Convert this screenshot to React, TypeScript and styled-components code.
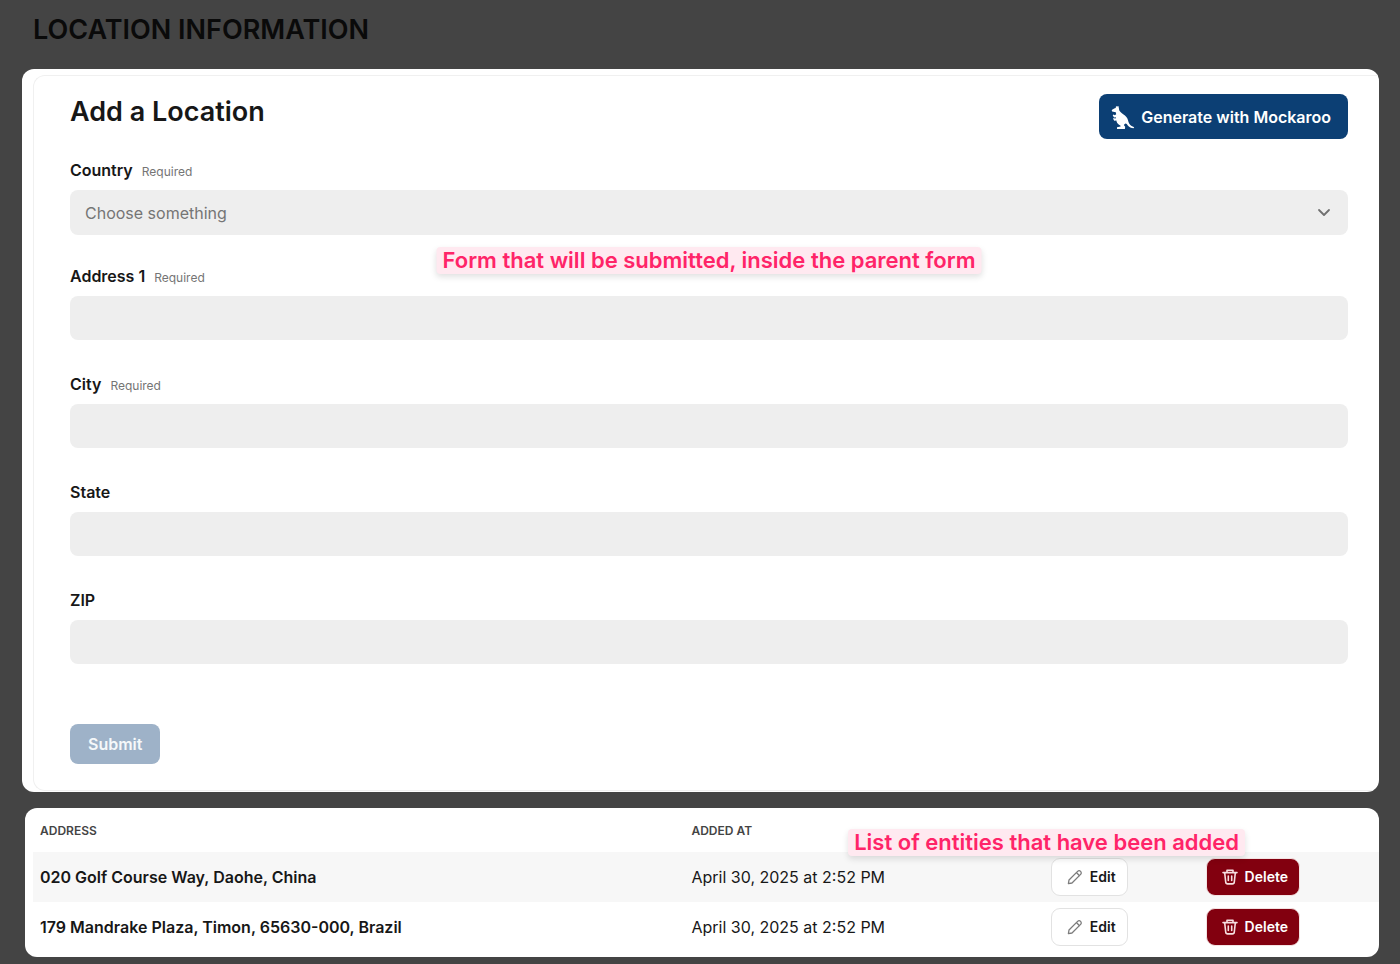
import React from 'react';
import styled, { createGlobalStyle } from 'styled-components';

const GlobalStyle = createGlobalStyle`
  *, *::before, *::after { box-sizing: border-box; }
  body {
    margin: 0;
    background: #444444;
    color: #171717;
    font-family: Inter, "Liberation Sans", sans-serif;
    font-size: 16px;
    line-height: 20px;
  }
  button, input, select { font: inherit; }
`;

const Page = styled.main`
  padding: 10px 21px 6px 22px;
`;

const PageTitle = styled.h1`
  margin: 0 0 19px;
  padding-left: 11px;
  color: #0a0a0a;
  font-size: 27px;
  line-height: 40px;
  font-weight: 600;
`;

const Panel = styled.section`
  position: relative;
  background: #ffffff;
  border-radius: 12px;
  overflow: hidden;
`;

const FormPanel = styled(Panel)`
  margin-bottom: 16px;
  padding: 6px 0 1px 11px;
`;

const ListPanel = styled(Panel)`
  margin-left: 3px;
  padding: 0 0 5px 8px;
`;

const FormCard = styled.form`
  padding: 18px 31px 26px 36px;
  border: 1px solid #f0f0f0;
  border-right: 0;
  border-radius: 12px 0 0 12px;
`;

const CardHeader = styled.header`
  display: flex;
  justify-content: space-between;
  align-items: flex-start;
  margin-bottom: 21px;
`;

const CardTitle = styled.h2`
  margin: 0;
  font-size: 27px;
  line-height: 36px;
  font-weight: 600;
`;

const MockarooButton = styled.button`
  display: flex;
  align-items: center;
  gap: 6px;
  height: 45px;
  padding: 0 17px 0 12px;
  border: 0;
  border-radius: 8px;
  background: #0c3f74;
  color: #ffffff;
  font-weight: 600;
`;

const Field = styled.div<{ $gap: number }>`
  position: relative;
  margin-bottom: ${(p) => p.$gap}px;
`;

const FieldLabel = styled.label`
  display: flex;
  align-items: baseline;
  gap: 9px;
  height: 20px;
  margin-bottom: 10px;
  font-weight: 600;
`;

const Required = styled.span`
  color: #757575;
  font-size: 12px;
  font-weight: 400;
`;

const TextInput = styled.input`
  display: block;
  width: 100%;
  height: 44px;
  padding: 0 15px;
  border: 0;
  border-radius: 8px;
  background: #eeeeee;
`;

const SelectBox = styled.div`
  position: relative;
`;

const Select = styled.select`
  display: block;
  width: 100%;
  height: 45px;
  padding: 0 40px 0 15px;
  border: 0;
  border-radius: 8px;
  background: #eeeeee;
  color: #757575;
  appearance: none;
`;

const SelectArrow = styled.svg`
  position: absolute;
  top: 14px;
  right: 16px;
  pointer-events: none;
`;

const SubmitButton = styled.button`
  display: block;
  height: 40px;
  padding: 0 18px;
  border: 0;
  border-radius: 8px;
  background: #9eb2c8;
  color: #f5f8fa;
  font-weight: 600;
`;

const Callout = styled.p`
  position: absolute;
  z-index: 1;
  margin: 0;
  padding: 0 6px;
  border-radius: 4px;
  background: #ffe9f0;
  box-shadow: 0 3px 6px rgba(0, 0, 0, 0.12);
  color: #ff2468;
  font-size: 22px;
  line-height: 27px;
  font-weight: 600;
  white-space: nowrap;
`;

const FormCallout = styled(Callout)`
  top: calc(100% + 12px);
  left: 50%;
  transform: translateX(-50%);
`;

const ListCallout = styled(Callout)`
  top: 21px;
  right: 134px;
`;

const Table = styled.table`
  width: 100%;
  border-collapse: collapse;
  table-layout: fixed;
`;

const HeadCell = styled.th<{ $width: string }>`
  width: ${(p) => p.$width};
  height: 44px;
  padding: 1px 7px 0;
  color: #444444;
  font-size: 12px;
  font-weight: 600;
  text-align: left;
`;

const Row = styled.tr`
  &:nth-child(odd) { background: #f7f7f7; }
`;

const Cell = styled.td<{ $strong?: boolean }>`
  height: 50px;
  padding: 0 7px;
  font-weight: ${(p) => (p.$strong ? 600 : 400)};
`;

const ActionButton = styled.button<{ $danger?: boolean }>`
  display: flex;
  align-items: center;
  gap: 6px;
  height: 38px;
  padding: 0 11px 0 14px;
  border: 1px solid ${(p) => (p.$danger ? '#f3e3e3' : '#e2e2e2')};
  border-radius: 9px;
  background: ${(p) => (p.$danger ? '#82000f' : '#ffffff')};
  color: ${(p) => (p.$danger ? '#ffffff' : '#171717')};
  font-size: 14px;
  font-weight: 600;
`;

const KangarooIcon = () => (
  <svg width="24" height="24" viewBox="0 0 24 24" fill="#ffffff" aria-hidden="true">
    <path d="M5 1.2 6.2 1.5 7.4 .9 7.9 3.2 8.2 5.2C8.9 6.8 10.4 7.9 12.2 9.2C14.8 11 16.5 12.6 17 15.2C17.6 17.7 18.5 19.4 20.2 20.8L23.2 22.3 22.6 23.3C20.4 23.1 18 22 16.6 20.2C16 19.2 15.5 18.7 14.7 18.6C13.8 18.9 13.1 19.5 13 20.2L14.2 21.7 13.9 23.9H6V22.3L9.6 21.6 9.4 20.6C7.4 19.6 6 18.2 5.6 16.5L5.4 15.6 3.2 15.7 2 13.4 3.1 12.9 4 13.7 5 13.1 4.8 12.2 3 12.4 1.7 10.2 2.6 9.4 3.8 10.3 5.2 9.2 4.8 7.3 3.5 7.1 1.1 6.6.7 5 3.2 3.4 4.7 2.9Z" />
  </svg>
);

const PencilIcon = () => (
  <svg width="18" height="18" viewBox="0 0 18 18" fill="none" stroke="#7c7c7c" strokeWidth="1.3" strokeLinejoin="round" strokeLinecap="round" aria-hidden="true">
    <path d="M3 12 11.6 3.4a2.1 2.1 0 0 1 3 3L6 15l-3.6.6L3 12Z" />
    <path d="m10.6 4.8 2.7 2.7" />
  </svg>
);

const TrashIcon = () => (
  <svg width="18" height="18" viewBox="0 0 18 18" fill="none" stroke="#f6dfe1" strokeWidth="1.6" strokeLinejoin="round" strokeLinecap="round" aria-hidden="true">
    <path d="M2 4.6h14M6 4.4V2.2h6v2.2M3.7 4.8l1 9.2a2 2 0 0 0 2 1.9h4.6a2 2 0 0 0 2-1.9l1-9.2" />
    <path d="M7.3 8v4.4M10.7 8v4.4" />
  </svg>
);

const textFields = [
  { id: 'address1', label: 'Address 1', required: true },
  { id: 'city', label: 'City', required: true },
  { id: 'state', label: 'State', required: false },
  { id: 'zip', label: 'ZIP', required: false },
];

const locations = [
  { address: '020 Golf Course Way, Daohe, China', addedAt: 'April 30, 2025 at 2:52 PM' },
  { address: '179 Mandrake Plaza, Timon, 65630-000, Brazil', addedAt: 'April 30, 2025 at 2:52 PM' },
];

export default function App() {
  return (
    <>
      <GlobalStyle />
      <Page>
        <PageTitle>LOCATION INFORMATION</PageTitle>
        <FormPanel>
          <FormCard onSubmit={(e) => e.preventDefault()}>
            <CardHeader>
              <CardTitle>Add a Location</CardTitle>
              <MockarooButton type="button">
                <KangarooIcon />
                Generate with Mockaroo
              </MockarooButton>
            </CardHeader>
            <Field $gap={31}>
              <FieldLabel htmlFor="country">
                Country <Required>Required</Required>
              </FieldLabel>
              <SelectBox>
                <Select id="country" defaultValue="">
                  <option value="">Choose something</option>
                </Select>
                <SelectArrow width="16" height="16" viewBox="0 0 16 16" fill="none" stroke="#707070" strokeWidth="1.8" strokeLinecap="round" strokeLinejoin="round">
                  <path d="m3 6 5 5 5-5" />
                </SelectArrow>
              </SelectBox>
              <FormCallout>Form that will be submitted, inside the parent form</FormCallout>
            </Field>
            {textFields.map((field, i) => (
              <Field key={field.id} $gap={i === textFields.length - 1 ? 60 : 34}>
                <FieldLabel htmlFor={field.id}>
                  {field.label} {field.required && <Required>Required</Required>}
                </FieldLabel>
                <TextInput id={field.id} type="text" />
              </Field>
            ))}
            <SubmitButton type="submit">Submit</SubmitButton>
          </FormCard>
        </FormPanel>
        <ListPanel>
          <Table>
            <thead>
              <tr>
                <HeadCell scope="col" $width="48.4%">ADDRESS</HeadCell>
                <HeadCell scope="col" $width="26.7%">ADDED AT</HeadCell>
                <HeadCell scope="col" $width="11.5%" aria-label="Edit" />
                <HeadCell scope="col" $width="13.4%" aria-label="Delete" />
              </tr>
            </thead>
            <tbody>
              {locations.map((location) => (
                <Row key={location.address}>
                  <Cell $strong>{location.address}</Cell>
                  <Cell>{location.addedAt}</Cell>
                  <Cell>
                    <ActionButton type="button">
                      <PencilIcon />
                      Edit
                    </ActionButton>
                  </Cell>
                  <Cell>
                    <ActionButton type="button" $danger>
                      <TrashIcon />
                      Delete
                    </ActionButton>
                  </Cell>
                </Row>
              ))}
            </tbody>
          </Table>
          <ListCallout>List of entities that have been added</ListCallout>
        </ListPanel>
      </Page>
    </>
  );
}
